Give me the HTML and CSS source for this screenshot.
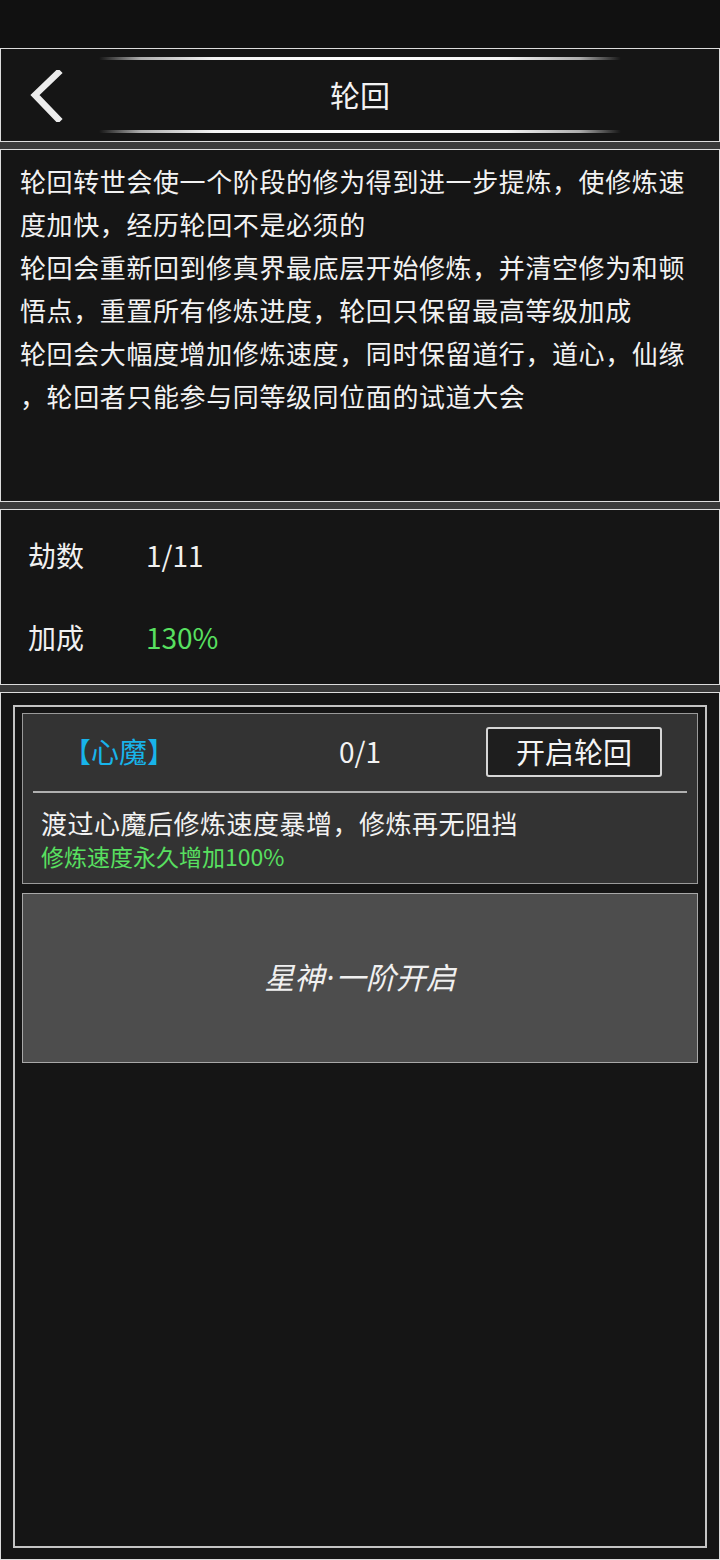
FILE: index.html
```html
<!DOCTYPE html>
<html lang="zh-CN">
<head>
<meta charset="utf-8">
<title>轮回</title>
<link rel="stylesheet" href="styles.css">
</head>
<body>
<div class="status"></div>
<div class="page">
  <header class="box header">
    <div class="deco"></div>
    <div class="title-row">
      <div class="back">
        <svg width="40" height="52" viewBox="0 0 40 52">
          <path d="M30 3 L7 25 L30 49" fill="none" stroke="#ececec" stroke-width="6.5" stroke-linecap="square" stroke-linejoin="miter"/>
        </svg>
      </div>
      <div class="title">轮回</div>
      <div></div>
    </div>
    <div class="deco"></div>
  </header>

  <section class="box intro">
    <div class="line">轮回转世会使一个阶段的修为得到进一步提炼，使修炼速</div>
    <div class="line">度加快，经历轮回不是必须的</div>
    <div class="line">轮回会重新回到修真界最底层开始修炼，并清空修为和顿</div>
    <div class="line">悟点，重置所有修炼进度，轮回只保留最高等级加成</div>
    <div class="line">轮回会大幅度增加修炼速度，同时保留道行，道心，仙缘</div>
    <div class="line">，轮回者只能参与同等级同位面的试道大会</div>
  </section>

  <section class="box stats">
    <div class="stat"><span class="label">劫数</span><span class="value">1/11</span></div>
    <div class="stat"><span class="label">加成</span><span class="value green">130%</span></div>
  </section>

  <section class="box main">
    <div class="frame">
      <div class="card">
        <div class="card-head">
          <div class="tag">【心魔】</div>
          <div class="count">0/1</div>
          <div class="btn-wrap"><div class="btn">开启轮回</div></div>
        </div>
        <div class="sep"></div>
        <div class="desc">渡过心魔后修炼速度暴增，修炼再无阻挡</div>
        <div class="bonus">修炼速度永久增加100%</div>
      </div>
      <div class="card locked">
        <span class="locked-text">星神<span class="dot">·</span>一阶开启</span>
      </div>
    </div>
  </section>
</div>
</body>
</html>
```

FILE: styles.css
```css
* { box-sizing: border-box; }

html, body {
  margin: 0;
  padding: 0;
}

body {
  width: 720px;
  height: 1560px;
  overflow: hidden;
  background: #393939;
  font-family: "Noto Sans CJK SC", "Noto Sans", sans-serif;
  color: #f0f0f0;
}

.status {
  height: 48px;
  background: #111111;
}

.page {
  display: flex;
  flex-direction: column;
  gap: 7px;
}

.box {
  background: #151515;
  border: 1px solid #dcdcdc;
}

/* Header */
.header {
  height: 94px;
  padding-top: 8px;
  display: flex;
  flex-direction: column;
}

.deco {
  margin-left: 98px;
  width: 522px;
  height: 3px;
  border-radius: 2px;
  background: linear-gradient(90deg,
    rgba(200,200,200,0) 0%,
    rgba(210,210,210,0.8) 8%,
    #f4f4f4 22%,
    #ffffff 50%,
    #f4f4f4 78%,
    rgba(210,210,210,0.8) 92%,
    rgba(200,200,200,0) 100%);
}

.title-row {
  height: 70px;
  display: grid;
  grid-template-columns: 1fr auto 1fr;
  align-items: center;
}

.back {
  padding-left: 27px;
  display: flex;
  align-items: center;
  padding-top: 2px;
}

.title {
  font-size: 30px;
  color: #f2f2f2;
  margin-top: -2px;
}

/* Intro text */
.intro {
  height: 353px;
  padding: 9px 0 0 19px;
  font-size: 26px;
  line-height: 43px;
  letter-spacing: 0.6px;
  color: #f2f2f2;
}

.line {
  white-space: nowrap;
}

/* Stats */
.stats {
  height: 176px;
  padding: 4px 0 0 27px;
}

.stat {
  height: 82px;
  display: flex;
  align-items: center;
  font-size: 28px;
}

.label {
  width: 118px;
  color: #f0f0f0;
}

.value {
  color: #f0f0f0;
}

.green {
  color: #58e060;
}

/* Main */
.main {
  height: 868px;
  padding: 12px 12px 11px 12px;
}

.frame {
  height: 100%;
  border: 2px solid #c4c4c4;
  padding: 6px 7px;
  display: flex;
  flex-direction: column;
  gap: 9px;
}

.card {
  background: #333333;
  border: 1px solid #9a9a9a;
  height: 171px;
  display: flex;
  flex-direction: column;
}

.card-head {
  margin-top: 13px;
  height: 50px;
  display: grid;
  grid-template-columns: 1fr auto 1fr;
  align-items: center;
}

.tag {
  padding-left: 40px;
  font-size: 28px;
  color: #18b4ea;
  margin-top: -3px;
}

.count {
  font-size: 28px;
  color: #f2f2f2;
  margin-top: -3px;
}

.btn-wrap {
  display: flex;
  justify-content: flex-end;
  padding-right: 35px;
}

.btn {
  width: 176px;
  height: 50px;
  border: 2px solid #d6d6d6;
  border-radius: 3px;
  background: #1e1e1e;
  font-size: 29px;
  color: #f4f4f4;
  display: flex;
  align-items: center;
  justify-content: center;
  padding-bottom: 2px;
}

.sep {
  margin: 14px 10px 0 10px;
  height: 2px;
  background: #b0b0b0;
}

.desc {
  margin-top: 13px;
  padding-left: 18px;
  font-size: 26px;
  letter-spacing: 0.5px;
  line-height: 34px;
  color: #f2f2f2;
}

.bonus {
  margin-top: 1px;
  padding-left: 18px;
  font-size: 23px;
  line-height: 30px;
  color: #58e060;
}

.locked {
  background: #4d4d4d;
  border-color: #a8a8a8;
  height: 170px;
  align-items: center;
  justify-content: center;
}

.locked-text {
  font-size: 30px;
  font-style: italic;
  color: #f0f0f0;
  margin-top: -4px;
}

.dot {
  font-family: "Noto Sans", sans-serif;
  padding: 0 2px;
}
```
